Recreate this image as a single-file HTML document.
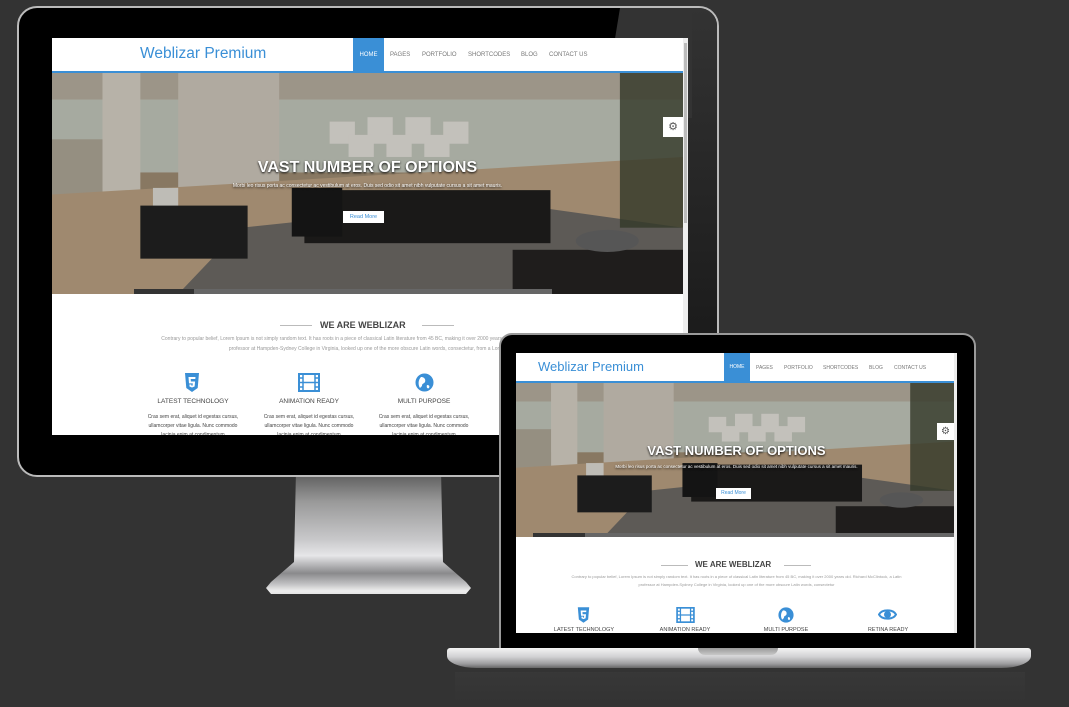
<!DOCTYPE html>
<html><head><meta charset="utf-8"><style>
*{margin:0;padding:0;box-sizing:border-box}
body{width:1069px;height:707px;background:#333;position:relative;overflow:hidden;font-family:"Liberation Sans",sans-serif}
.abs{position:absolute}
.site{background:#fff;overflow:hidden}
.logo{color:#3a8fd6;position:absolute;white-space:nowrap}
.nav{position:absolute;color:#777;white-space:nowrap}
.home{position:absolute;background:#3a8fd6;color:#fff;text-align:center}
.t{position:absolute;color:#fff;font-weight:bold;white-space:nowrap;text-align:center;text-shadow:0 1px 2px #000}
.gray{color:#999}
.lbl{position:absolute;color:#444;white-space:nowrap;text-align:center;transform:translateX(-50%)}
</style></head><body>

<div class="abs" style="left:266px;top:470px;width:205px;height:126px;background:linear-gradient(#555 0%,#999 25%,#c8c8ca 55%,#e6e6e8 68%,#8a8a8c 82%,#bdbdbf 90%,#eee 96%,#ddd 100%);clip-path:polygon(30px 0,175px 0,177px 92px,200px 112px,205px 118px,200px 124px,5px 124px,0 118px,5px 112px,28px 92px)"></div>

<div class="abs" style="left:17px;top:6px;width:702px;height:471px;border-radius:20px;border:2px solid #bbb;background:#000;overflow:hidden">
  <div class="abs" style="left:668px;top:0;width:40px;height:470px;background:linear-gradient(#333,#111)"></div>
  <div class="abs" style="left:583px;top:0;width:90px;height:110px;background:#333;clip-path:polygon(18px 0,90px 0,90px 110px,0 110px)"></div>
</div>

<div class="abs site" style="left:52px;top:38px;width:636px;height:397px">
  <div class="logo" style="left:88px;top:7px;font-size:15.5px">Weblizar Premium</div>
  <div class="home" style="left:301px;top:0;width:31px;height:33px;font-size:6px;line-height:34px">HOME</div>
  <div class="nav" style="left:338px;top:14px;font-size:6px">PAGES</div>
  <div class="nav" style="left:370px;top:14px;font-size:6px">PORTFOLIO</div>
  <div class="nav" style="left:416px;top:14px;font-size:6px">SHORTCODES</div>
  <div class="nav" style="left:469px;top:14px;font-size:6px">BLOG</div>
  <div class="nav" style="left:497px;top:14px;font-size:6px">CONTACT US</div>
  <div class="abs" style="left:0;top:33px;width:631px;height:2px;background:#3a8fd6"></div>
  <div class="abs" style="left:631px;top:0;width:5px;height:397px;background:#eee"></div>
  <div class="abs" style="left:632px;top:5px;width:3px;height:180px;background:#bbb"></div>
  <svg class="abs" style="left:0;top:35px" width="631" height="221" viewBox="0 0 100 100" preserveAspectRatio="none">
    <rect width="100" height="100" fill="#a08e74"/>
    <rect x="0" y="0" width="100" height="45" fill="#c4c8bc"/>
    <rect x="0" y="0" width="100" height="12" fill="#b8b0a0"/>
    <rect x="8" y="0" width="6" height="60" fill="#d8d2c6"/>
    <rect x="20" y="0" width="16" height="62" fill="#cfc8bc"/>
    <rect x="0" y="30" width="8" height="70" fill="#b0a898"/>
    <polygon points="0,55 100,38 100,100 0,100" fill="#bba283"/>
    <polygon points="30,70 70,58 100,70 100,100 20,100" fill="#6e6a66"/>
    <g fill="#e6e3dc"><rect x="44" y="22" width="4" height="10"/><rect x="50" y="20" width="4" height="12"/><rect x="56" y="20" width="4" height="12"/><rect x="62" y="22" width="4" height="10"/><rect x="47" y="28" width="4" height="10"/><rect x="53" y="28" width="4" height="10"/><rect x="59" y="28" width="4" height="10"/></g>
    <rect x="16" y="52" width="4" height="20" fill="#e0ddd6"/>
    <rect x="14" y="60" width="17" height="24" fill="#222"/>
    <rect x="40" y="53" width="39" height="24" fill="#1f1e1d"/>
    <rect x="38" y="52" width="8" height="22" fill="#181818"/>
    <rect x="73" y="80" width="27" height="20" fill="#252321"/>
    <circle cx="88" cy="76" r="5" fill="#666"/>
    <rect x="90" y="0" width="10" height="70" fill="#3c4230" opacity=".8"/>
    <rect x="0" y="0" width="100" height="100" fill="#000" opacity=".15"/>
  </svg>
  <div class="abs" style="left:82px;top:251px;width:60px;height:5px;background:#333"></div>
  <div class="abs" style="left:142px;top:251px;width:358px;height:5px;background:#666"></div>
  <div class="abs" style="left:611px;top:79px;width:20px;height:20px;background:#fff;font-size:11px;color:#555;text-align:center;line-height:20px">⚙</div>
  <div class="t" style="left:0;width:631px;top:121px;font-size:16px">VAST NUMBER OF OPTIONS</div>
  <div class="t" style="left:0;width:631px;top:145px;font-size:5px;font-weight:normal">Morbi leo risus porta ac consectetur ac vestibulum at eros. Duis sed odio sit amet nibh vulputate cursus a sit amet mauris.</div>
  <div class="abs" style="left:291px;top:173px;width:41px;height:12px;background:#fff;color:#3a8fd6;font-size:5.5px;text-align:center;line-height:12px">Read More</div>
  <div class="abs" style="left:228px;top:287px;width:32px;height:1px;background:#bbb"></div>
  <div class="abs" style="left:370px;top:287px;width:32px;height:1px;background:#bbb"></div>
  <div class="abs" style="left:268px;top:282px;font-size:9px;color:#444;font-weight:bold">WE ARE WEBLIZAR</div>
  <div class="abs gray" style="left:0;width:631px;top:296px;font-size:5px;text-align:center;line-height:10px">Contrary to popular belief, Lorem Ipsum is not simply random text. It has roots in a piece of classical Latin literature from 45 BC, making it over 2000 years old. Richard McClintock, a Latin<br>professor at Hampden-Sydney College in Virginia, looked up one of the more obscure Latin words, consectetur, from a Lorem</div>
  <svg class="abs" style="left:132px;top:335px" width="16" height="19" viewBox="0 0 16 19"><path d="M1 0h14l-1.3 15L8 19 2.3 15z" fill="#3a8fd6"/><path d="M4.5 4h7l-.2 2H6.7l.2 2.5h4.2l-.5 5L8 14.5 5.5 13.5l-.1-2h1.9l.1 1 .6.3.6-.3.2-2.1H5z" fill="#fff"/></svg>
  <svg class="abs" style="left:246px;top:335px" width="22" height="19" viewBox="0 0 22 19"><rect x="1" y="1" width="20" height="17" fill="none" stroke="#3a8fd6" stroke-width="2"/><path d="M5 1v17M17 1v17M1 5h4M1 9.5h4M1 14h4M17 5h4M17 9.5h4M17 14h4M5 9.5h12" stroke="#3a8fd6" stroke-width="1.5"/></svg>
  <svg class="abs" style="left:363px;top:335px" width="19" height="19" viewBox="0 0 19 19"><circle cx="9.5" cy="9.5" r="9" fill="#3a8fd6"/><path d="M6 4c3 0 5 2 4 5-1 2-3 1-3 4l-2 2c-2-3-2-8 1-11zM12 12c2 0 3 1 2 3-1 1-3 0-2-3z" fill="#fff"/></svg>
  <div class="lbl" style="left:141px;top:360px;font-size:6.5px">LATEST TECHNOLOGY</div>
  <div class="lbl" style="left:257px;top:360px;font-size:6.5px">ANIMATION READY</div>
  <div class="lbl" style="left:372px;top:360px;font-size:6.5px">MULTI PURPOSE</div>
  <div class="lbl gray" style="left:141px;top:375px;font-size:5px;line-height:9px">Cras sem erat, aliquet id egestas cursus,<br>ullamcorper vitae ligula. Nunc commodo<br>lacinia enim at condimentum</div>
  <div class="lbl gray" style="left:257px;top:375px;font-size:5px;line-height:9px">Cras sem erat, aliquet id egestas cursus,<br>ullamcorper vitae ligula. Nunc commodo<br>lacinia enim at condimentum</div>
  <div class="lbl gray" style="left:372px;top:375px;font-size:5px;line-height:9px">Cras sem erat, aliquet id egestas cursus,<br>ullamcorper vitae ligula. Nunc commodo<br>lacinia enim at condimentum</div>
</div>

<div class="abs" style="left:499px;top:333px;width:477px;height:318px;border-radius:13px 13px 0 0;border:2px solid #9a9a9a;border-bottom:none;background:#000"></div>
<div class="abs" style="left:447px;top:648px;width:584px;height:20px;border-radius:3px 3px 30px 30px/3px 3px 12px 12px;background:linear-gradient(#f4f4f4,#d0d0d2 45%,#9a9a9c 80%,#666)"></div>
<div class="abs" style="left:698px;top:648px;width:80px;height:7px;border-radius:0 0 8px 8px;background:linear-gradient(#999,#c8c8c8)"></div>
<div class="abs" style="left:455px;top:672px;width:570px;height:30px;background:linear-gradient(rgba(60,60,60,.5),rgba(51,51,51,0))"></div>

<div class="abs site" style="left:516px;top:353px;width:441px;height:280px">
  <div class="logo" style="left:22px;top:6px;font-size:13px">Weblizar Premium</div>
  <div class="home" style="left:208px;top:0;width:26px;height:28px;font-size:5px;line-height:29px">HOME</div>
  <div class="nav" style="left:240px;top:12px;font-size:5px">PAGES</div>
  <div class="nav" style="left:268px;top:12px;font-size:5px">PORTFOLIO</div>
  <div class="nav" style="left:307px;top:12px;font-size:5px">SHORTCODES</div>
  <div class="nav" style="left:353px;top:12px;font-size:5px">BLOG</div>
  <div class="nav" style="left:378px;top:12px;font-size:5px">CONTACT US</div>
  <div class="abs" style="left:0;top:28px;width:438px;height:2px;background:#3a8fd6"></div>
  <div class="abs" style="left:438px;top:0;width:3px;height:280px;background:#eee"></div>
  <svg class="abs" style="left:0;top:30px" width="438" height="154" viewBox="0 0 100 100" preserveAspectRatio="none">
    <rect width="100" height="100" fill="#a08e74"/>
    <rect x="0" y="0" width="100" height="45" fill="#c4c8bc"/>
    <rect x="0" y="0" width="100" height="12" fill="#b8b0a0"/>
    <rect x="8" y="0" width="6" height="60" fill="#d8d2c6"/>
    <rect x="20" y="0" width="16" height="62" fill="#cfc8bc"/>
    <rect x="0" y="30" width="8" height="70" fill="#b0a898"/>
    <polygon points="0,55 100,38 100,100 0,100" fill="#bba283"/>
    <polygon points="30,70 70,58 100,70 100,100 20,100" fill="#6e6a66"/>
    <g fill="#e6e3dc"><rect x="44" y="22" width="4" height="10"/><rect x="50" y="20" width="4" height="12"/><rect x="56" y="20" width="4" height="12"/><rect x="62" y="22" width="4" height="10"/><rect x="47" y="28" width="4" height="10"/><rect x="53" y="28" width="4" height="10"/><rect x="59" y="28" width="4" height="10"/></g>
    <rect x="16" y="52" width="4" height="20" fill="#e0ddd6"/>
    <rect x="14" y="60" width="17" height="24" fill="#222"/>
    <rect x="40" y="53" width="39" height="24" fill="#1f1e1d"/>
    <rect x="38" y="52" width="8" height="22" fill="#181818"/>
    <rect x="73" y="80" width="27" height="20" fill="#252321"/>
    <circle cx="88" cy="76" r="5" fill="#666"/>
    <rect x="90" y="0" width="10" height="70" fill="#3c4230" opacity=".8"/>
    <rect x="0" y="0" width="100" height="100" fill="#000" opacity=".15"/>
  </svg>
  <div class="abs" style="left:17px;top:180px;width:52px;height:4px;background:#333"></div>
  <div class="abs" style="left:69px;top:180px;width:369px;height:4px;background:#666"></div>
  <div class="abs" style="left:421px;top:70px;width:17px;height:17px;background:#fff;font-size:10px;color:#555;text-align:center;line-height:17px">⚙</div>
  <div class="t" style="left:0;width:441px;top:90px;font-size:13px">VAST NUMBER OF OPTIONS</div>
  <div class="t" style="left:0;width:441px;top:111px;font-size:4.5px;font-weight:normal">Morbi leo risus porta ac consectetur ac vestibulum at eros. Duis sed odio sit amet nibh vulputate cursus a sit amet mauris.</div>
  <div class="abs" style="left:200px;top:135px;width:35px;height:11px;background:#fff;color:#3a8fd6;font-size:5px;text-align:center;line-height:11px">Read More</div>
  <div class="abs" style="left:145px;top:212px;width:27px;height:1px;background:#bbb"></div>
  <div class="abs" style="left:268px;top:212px;width:27px;height:1px;background:#bbb"></div>
  <div class="abs" style="left:179px;top:207px;font-size:8px;color:#444;font-weight:bold">WE ARE WEBLIZAR</div>
  <div class="abs gray" style="left:0;width:441px;top:220px;font-size:4px;text-align:center;line-height:8px">Contrary to popular belief, Lorem Ipsum is not simply random text. It has roots in a piece of classical Latin literature from 45 BC, making it over 2000 years old. Richard McClintock, a Latin<br>professor at Hampden-Sydney College in Virginia, looked up one of the more obscure Latin words, consectetur</div>
  <svg class="abs" style="left:61px;top:254px" width="13" height="16" viewBox="0 0 16 19"><path d="M1 0h14l-1.3 15L8 19 2.3 15z" fill="#3a8fd6"/><path d="M4.5 4h7l-.2 2H6.7l.2 2.5h4.2l-.5 5L8 14.5 5.5 13.5l-.1-2h1.9l.1 1 .6.3.6-.3.2-2.1H5z" fill="#fff"/></svg>
  <svg class="abs" style="left:160px;top:254px" width="19" height="16" viewBox="0 0 22 19"><rect x="1" y="1" width="20" height="17" fill="none" stroke="#3a8fd6" stroke-width="2"/><path d="M5 1v17M17 1v17M1 5h4M1 9.5h4M1 14h4M17 5h4M17 9.5h4M17 14h4M5 9.5h12" stroke="#3a8fd6" stroke-width="1.5"/></svg>
  <svg class="abs" style="left:262px;top:254px" width="16" height="16" viewBox="0 0 19 19"><circle cx="9.5" cy="9.5" r="9" fill="#3a8fd6"/><path d="M6 4c3 0 5 2 4 5-1 2-3 1-3 4l-2 2c-2-3-2-8 1-11zM12 12c2 0 3 1 2 3-1 1-3 0-2-3z" fill="#fff"/></svg>
  <svg class="abs" style="left:362px;top:255px" width="19" height="13" viewBox="0 0 19 13"><path d="M1 6.5C4 1 15 1 18 6.5 15 12 4 12 1 6.5z" fill="none" stroke="#3a8fd6" stroke-width="2"/><circle cx="9.5" cy="6.5" r="3.5" fill="#3a8fd6"/></svg>
  <div class="lbl" style="left:68px;top:274px;font-size:5.5px">LATEST TECHNOLOGY</div>
  <div class="lbl" style="left:169px;top:274px;font-size:5.5px">ANIMATION READY</div>
  <div class="lbl" style="left:270px;top:274px;font-size:5.5px">MULTI PURPOSE</div>
  <div class="lbl" style="left:372px;top:274px;font-size:5.5px">RETINA READY</div>
</div>
</body></html>
